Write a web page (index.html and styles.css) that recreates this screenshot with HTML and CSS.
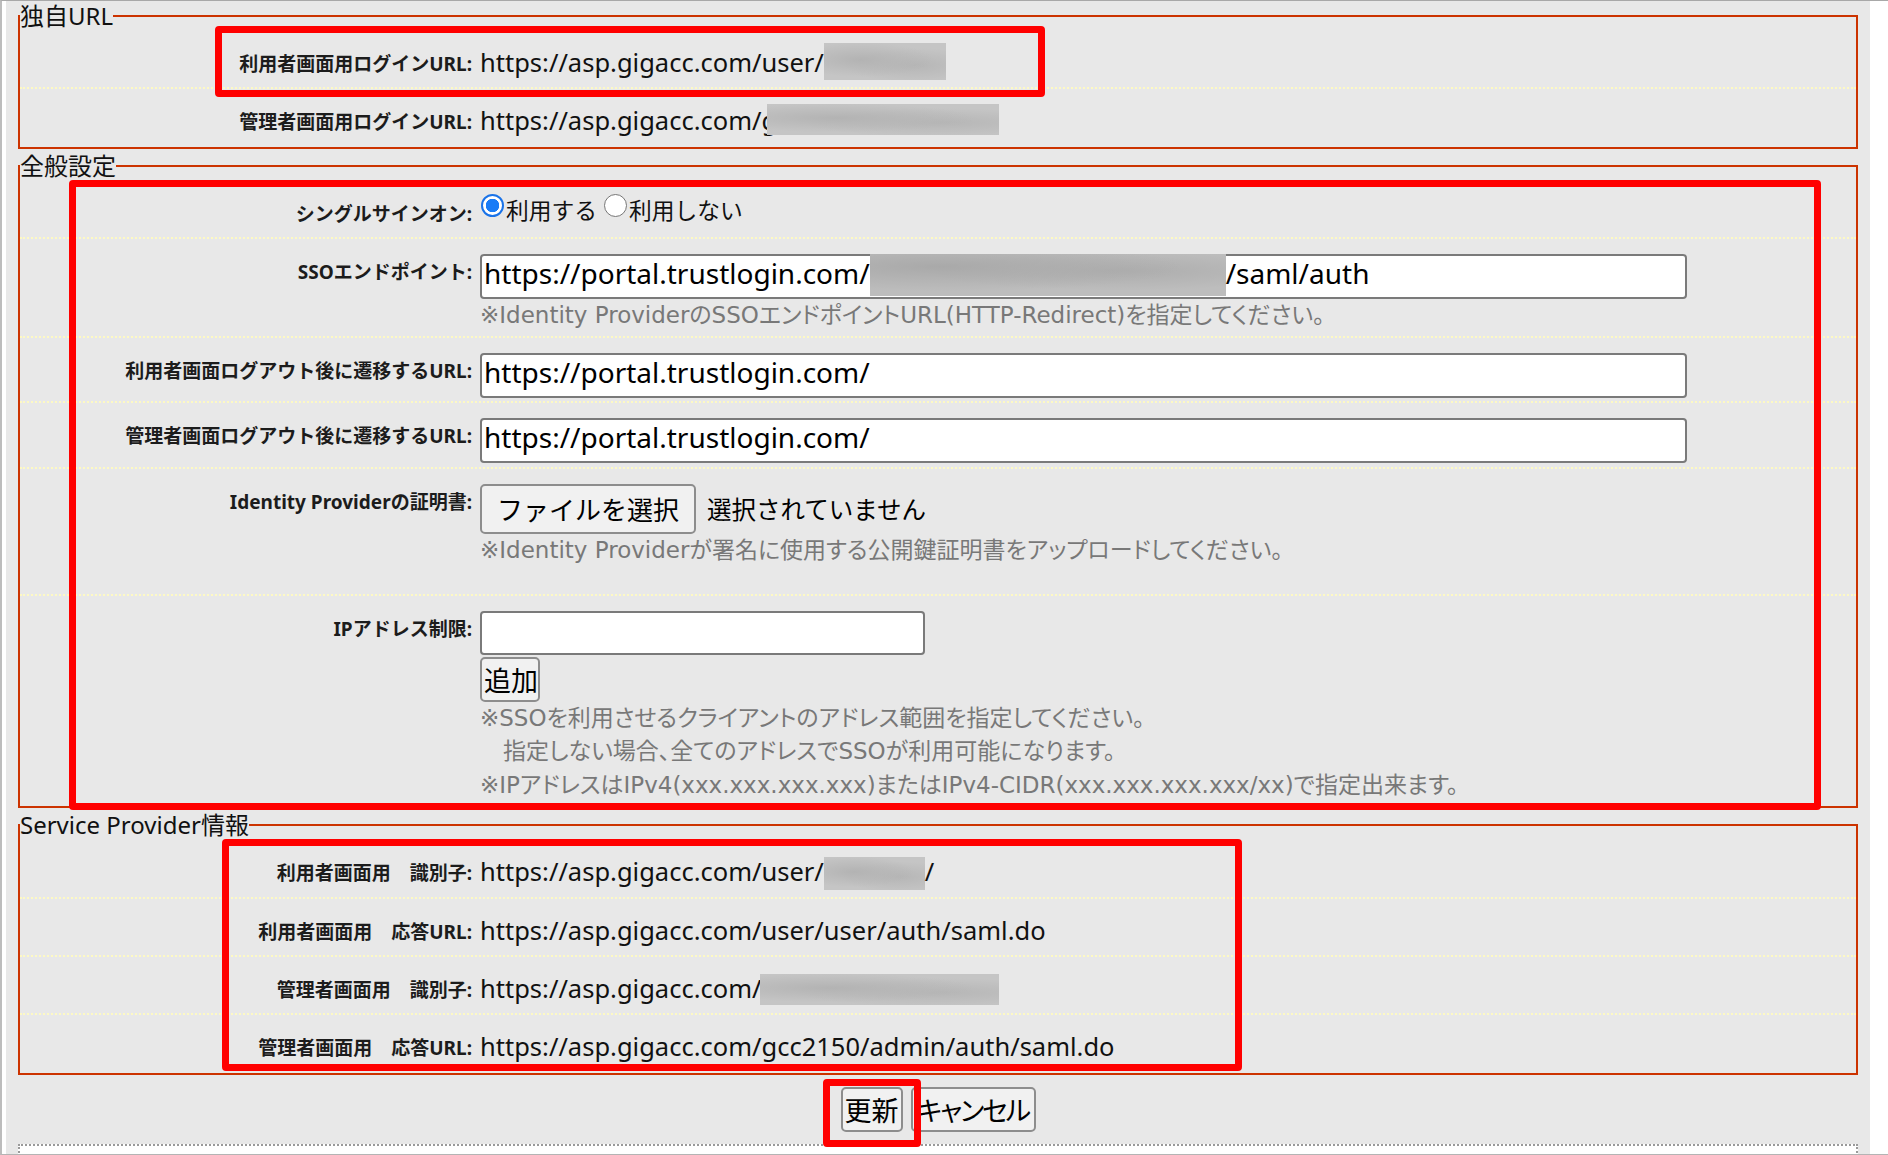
FILE: index.html
```html
<!DOCTYPE html>
<html lang="ja">
<head>
<meta charset="utf-8">
<title>SAML認証設定</title>
<link rel="stylesheet" href="styles.css">
</head>
<body>
<div class="window">
  <div class="panel">
    <form class="settings">
      <fieldset class="group">
        <legend>独自URL</legend>
        <div class="row">
          <div class="label">利用者画面用ログインURL:</div>
          <div class="value text">https://asp.gigacc.com/user/<span class="redact redact-user"></span></div>
        </div>
        <div class="row">
          <div class="label">管理者画面用ログインURL:</div>
          <div class="value text">https://asp.gigacc.com/g<span class="redact redact-admin"></span></div>
        </div>
      </fieldset>

      <fieldset class="group">
        <legend>全般設定</legend>
        <div class="row">
          <div class="label">シングルサインオン:</div>
          <div class="value choice">
            <label class="option"><input type="radio" name="sso" checked>利用する</label>
            <label class="option"><input type="radio" name="sso">利用しない</label>
          </div>
        </div>
        <div class="row">
          <div class="label">SSOエンドポイント:</div>
          <div class="value field">
            <div class="textbox textbox-wide">https://portal.trustlogin.com/<span class="redact redact-endpoint"></span>/saml/auth</div>
            <p class="hint">※Identity ProviderのSSOエンドポイントURL(HTTP-Redirect)を指定してください。</p>
          </div>
        </div>
        <div class="row">
          <div class="label">利用者画面ログアウト後に遷移するURL:</div>
          <div class="value field">
            <input class="textbox textbox-wide" type="text" value="https://portal.trustlogin.com/">
          </div>
        </div>
        <div class="row">
          <div class="label">管理者画面ログアウト後に遷移するURL:</div>
          <div class="value field field-tall">
            <input class="textbox textbox-wide" type="text" value="https://portal.trustlogin.com/">
          </div>
        </div>
        <div class="row">
          <div class="label">Identity Providerの証明書:</div>
          <div class="value field field-file">
            <div class="file">
              <button type="button" class="btn file-btn">ファイルを選択</button>
              <span class="file-name">選択されていません</span>
            </div>
            <p class="hint">※Identity Providerが署名に使用する公開鍵証明書をアップロードしてください。</p>
          </div>
        </div>
        <div class="row">
          <div class="label">IPアドレス制限:</div>
          <div class="value field field-ip">
            <input class="textbox textbox-ip" type="text" value="">
            <button type="button" class="btn btn-add">追加</button>
            <p class="hint">※SSOを利用させるクライアントのアドレス範囲を指定してください。<br>　指定しない場合、全てのアドレスでSSOが利用可能になります。<br>※IPアドレスはIPv4(xxx.xxx.xxx.xxx)またはIPv4-CIDR(xxx.xxx.xxx.xxx/xx)で指定出来ます。</p>
          </div>
        </div>
      </fieldset>

      <fieldset class="group">
        <legend>Service Provider情報</legend>
        <div class="row">
          <div class="label">利用者画面用　識別子:</div>
          <div class="value text">https://asp.gigacc.com/user/<span class="redact redact-sp-user"></span>/</div>
        </div>
        <div class="row">
          <div class="label">利用者画面用　応答URL:</div>
          <div class="value text">https://asp.gigacc.com/user/user/auth/saml.do</div>
        </div>
        <div class="row">
          <div class="label">管理者画面用　識別子:</div>
          <div class="value text">https://asp.gigacc.com/<span class="redact redact-sp-admin"></span></div>
        </div>
        <div class="row">
          <div class="label">管理者画面用　応答URL:</div>
          <div class="value text">https://asp.gigacc.com/gcc2150/admin/auth/saml.do</div>
        </div>
      </fieldset>

      <div class="actions">
        <button type="submit" class="btn btn-update">更新</button>
        <button type="button" class="btn btn-cancel">キャンセル</button>
      </div>

      <div class="next-block"></div>
    </form>
  </div>

  <div class="mark mark-login"></div>
  <div class="mark mark-general"></div>
  <div class="mark mark-sp"></div>
  <div class="mark mark-update"></div>
</div>
</body>
</html>
```

FILE: styles.css
```css
* {
  box-sizing: border-box;
}

html,
body {
  margin: 0;
  padding: 0;
  background: #fff;
}

body {
  font-family: "Noto Sans", "Noto Sans CJK JP", sans-serif;
  color: #111;
}

/* outer frame of the settings screen */
.window {
  position: relative;
  width: 1888px;
  height: 1155px;
  overflow: hidden;
  border-top: 1px solid #a8a8a8;
  border-bottom: 1px solid #b4b4b4;
  border-left: 2px solid #bcbcbc;
  padding-left: 4px;
  background: #fff;
}

.panel {
  width: 1864px;
  height: 100%;
  background: #e8e8e8;
  padding: 1px 12px 0;
}

.settings {
  margin: 0;
}

/* grouped sections */
.group {
  margin: 0;
  padding: 1px 0 0;
  border: 2px solid #cc3300;
  min-width: 0;
}

.group + .group {
  margin-top: 3px;
}

.group legend {
  padding: 0;
  font-size: 24px;
  line-height: 28px;
  color: #111;
}

/* label / value rows */
.row {
  display: grid;
  grid-template-columns: 452px 1fr;
  column-gap: 8px;
  align-items: start;
  border-bottom: 2px dotted #fdf9c4;
}

.row:last-child {
  border-bottom-color: transparent;
}

.label {
  padding-top: 19px;
  text-align: right;
  font-weight: 700;
  font-size: 19px;
  line-height: 28px;
  color: #1c1c1c;
  white-space: nowrap;
}

.value {
  min-width: 0;
  white-space: nowrap;
}

.text {
  padding: 13px 0 7px;
  font-size: 25.5px;
  line-height: 36px;
  color: #111;
}

.choice {
  padding: 12px 0 8px;
  font-size: 22.75px;
  line-height: 36px;
}

.field {
  padding: 15px 0 3px;
}

.field-tall {
  padding-bottom: 4px;
}

.field-file {
  padding-bottom: 26.5px;
}

.field-ip {
  padding-bottom: 2px;
}

/* radio buttons */
.option input {
  appearance: none;
  -webkit-appearance: none;
  display: inline-block;
  width: 23px;
  height: 23px;
  margin: 0 2px 0 1px;
  border: 1.5px solid #767676;
  border-radius: 50%;
  background: #fff;
  vertical-align: 2px;
}

.option input:checked {
  border: 2.5px solid #1a73e8;
  background: radial-gradient(circle at center, #1a7cf6 0 6.5px, #fff 7px);
}

/* text fields */
.textbox {
  display: block;
  height: 45px;
  margin: 0;
  padding: 0 2px 6px;
  border: 2px solid #7a7a7a;
  border-radius: 4px;
  background: #fff;
  font-family: "Noto Sans", "Noto Sans CJK JP", sans-serif;
  font-size: 28px;
  line-height: 35px;
  color: #000;
  outline: none;
}

.textbox-wide {
  width: 1207px;
}

.textbox-ip {
  width: 445px;
  height: 44px;
}

/* help text under the fields */
.hint {
  margin: 0;
  font-family: "DejaVu Sans", "Noto Sans CJK JP", sans-serif;
  font-size: 23px;
  line-height: 33.5px;
  color: #787878;
  font-feature-settings: "palt" 1;
  white-space: nowrap;
}

/* buttons */
.btn {
  height: 45px;
  margin: 0;
  padding: 0 2px;
  border: 2px solid #8d8d8d;
  border-radius: 5px;
  background: #f1f1f1;
  color: #000;
  font-family: "Noto Sans CJK JP", sans-serif;
  font-size: 27px;
  line-height: 1;
  white-space: nowrap;
}

.btn-add {
  display: block;
  width: 60px;
  margin-top: 2px;
}

.file {
  display: flex;
  align-items: center;
  gap: 11px;
  height: 50px;
}

.file-btn {
  width: 216px;
  height: 50px;
  font-size: 26px;
}

.file-name {
  font-family: "Noto Sans CJK JP", sans-serif;
  font-size: 24.5px;
  color: #000;
}

.actions {
  display: flex;
  justify-content: center;
  gap: 8px;
  padding: 12px 0;
}

.btn-update {
  width: 62px;
}

.btn-cancel {
  width: 125px;
  padding: 0;
  letter-spacing: -2px;
  font-feature-settings: "palt" 1;
}

/* start of the following section */
.next-block {
  height: 40px;
  border: 2px dotted #9a9a9a;
  border-bottom: 0;
  background: #fff;
}

/* masked values */
.redact {
  display: inline-block;
  vertical-align: top;
  background:
    radial-gradient(ellipse at 30% 45%, #b3b3b3, rgba(179, 179, 179, 0) 60%),
    radial-gradient(ellipse at 75% 60%, #b6b6b6, rgba(182, 182, 182, 0) 55%),
    #c5c5c5;
}

.redact-user {
  width: 122px;
  height: 37px;
  margin-top: -1px;
}

.redact-admin {
  width: 232px;
  height: 31px;
  margin: 2px 0 0 -10px;
}

.redact-endpoint {
  width: 356px;
  height: 42px;
  margin-top: -2px;
  background:
    radial-gradient(ellipse at 20% 30%, #a9a9a9, rgba(169, 169, 169, 0) 60%),
    radial-gradient(ellipse at 70% 40%, #adadad, rgba(173, 173, 173, 0) 55%),
    #bdbdbd;
}

.redact-sp-user {
  width: 101px;
  height: 33px;
  margin-top: 4px;
}

.redact-sp-admin {
  width: 239px;
  height: 31px;
  margin: 4px 0 0 -1px;
}

/* red highlight frames */
.mark {
  position: absolute;
  border: 7px solid #ff0000;
  border-radius: 4px;
  pointer-events: none;
}

.mark-login {
  left: 213px;
  top: 25px;
  width: 830px;
  height: 71px;
}

.mark-general {
  left: 67px;
  top: 179px;
  width: 1752px;
  height: 630px;
}

.mark-sp {
  left: 220px;
  top: 838px;
  width: 1020px;
  height: 232px;
}

.mark-update {
  left: 821px;
  top: 1078px;
  width: 98px;
  height: 68px;
}
```
